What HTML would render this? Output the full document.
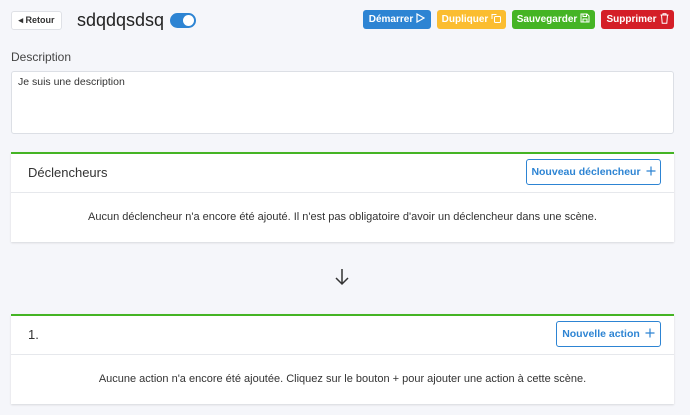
<!DOCTYPE html>
<html><head><meta charset="utf-8"><style>
*{box-sizing:border-box;margin:0;padding:0}
body{width:690px;height:415px;background:#f5f6fa;font-family:"Liberation Sans",sans-serif;color:#333;position:relative;overflow:hidden}
.a{position:absolute}
.btn{position:absolute;height:19px;line-height:19px;border-radius:3px;color:#fff;font-size:10px;font-weight:bold;text-align:center;white-space:nowrap}
.btn svg,.ob svg{vertical-align:middle;margin-left:3px;position:relative;top:-1px}
.card{position:absolute;left:11px;width:663px;background:#fff;border-top:2px solid #45b424;box-shadow:0 1px 2px rgba(0,0,0,.12)}
.hd{height:39px;border-bottom:1px solid #e6e8ec;position:relative}
.ob{position:absolute;height:26px;line-height:24px;border:1px solid #2d84d3;border-radius:3px;color:#2d84d3;font-size:10.5px;font-weight:bold;text-align:center;background:#fff;white-space:nowrap}
.msg{font-size:11px;color:#333;text-align:center}
</style></head><body>
<div class="a" style="left:11px;top:11px;width:51px;height:19px;line-height:17px;text-align:center;background:#fff;border:1px solid #dfe1e6;border-radius:3px;font-size:9px;font-weight:bold;color:#333">◂ Retour</div>
<div class="a" style="left:77px;top:10px;font-size:18px;color:#222">sdqdqsdsq</div>
<div class="a" style="left:170px;top:13px;width:26px;height:15px;border-radius:8px;background:#2d84d3"><div style="position:absolute;right:2px;top:2px;width:11px;height:11px;border-radius:50%;background:#fff"></div></div>
<div class="btn" style="left:363px;top:10px;width:68px;background:#2d84d3">Démarrer<svg width="9" height="10" viewBox="0 0 9 10"><path d="M1 1L8 5L1 9Z" fill="none" stroke="#fff" stroke-width="1.2"/></svg></div>
<div class="btn" style="left:437px;top:10px;width:69px;background:#fbbd30">Dupliquer<svg width="10" height="10" viewBox="0 0 10 10"><rect x="3.5" y="3.5" width="6" height="6" rx="1" fill="none" stroke="#fff"/><path d="M1 6V1.5h4.5" fill="none" stroke="#fff"/></svg></div>
<div class="btn" style="left:512px;top:10px;width:83px;background:#45b424">Sauvegarder<svg width="10" height="10" viewBox="0 0 10 10"><path d="M1 1h6l2 2v6H1Z M3 1v2.5h3.5V1 M3 9V6h4v3" fill="none" stroke="#fff"/></svg></div>
<div class="btn" style="left:601px;top:10px;width:73px;background:#d41e27">Supprimer<svg width="9" height="11" viewBox="0 0 9 11"><path d="M0.5 2h8M3 2V0.8h3V2M1.5 2l.7 8.3h4.6L7.5 2" fill="none" stroke="#fff"/></svg></div>
<div class="a" style="left:11px;top:50px;font-size:12px;color:#444">Description</div>
<div class="a" style="left:11px;top:71px;width:663px;height:63px;background:#fff;border:1px solid #dcdfe5;border-radius:3px;padding:4px 6px;font-size:10.5px;color:#333">Je suis une description</div>
<div class="card" style="top:152px;height:90px">
<div class="hd"><div class="a" style="left:17px;top:11px;font-size:13px;color:#333">Déclencheurs</div>
<div class="ob" style="left:515px;top:5px;width:135px">Nouveau déclencheur<svg width="10" height="10" viewBox="0 0 10 10" style="margin-left:5px"><path d="M5 0.5V9.5M0.5 5H9.5" stroke="#2d84d3" stroke-width="1.2"/></svg></div></div>
<div class="msg" style="padding-top:18px">Aucun déclencheur n'a encore été ajouté. Il n'est pas obligatoire d'avoir un déclencheur dans une scène.</div>
</div>
<svg class="a" style="left:334px;top:268px" width="16" height="18" viewBox="0 0 16 18"><path d="M8 1V16M2 10L8 16L14 10" fill="none" stroke="#333" stroke-width="1.5"/></svg>
<div class="card" style="top:314px;height:90px">
<div class="hd"><div class="a" style="left:17px;top:11px;font-size:13px;color:#333">1.</div>
<div class="ob" style="left:545px;top:5px;width:105px">Nouvelle action<svg width="10" height="10" viewBox="0 0 10 10" style="margin-left:5px"><path d="M5 0.5V9.5M0.5 5H9.5" stroke="#2d84d3" stroke-width="1.2"/></svg></div></div>
<div class="msg" style="padding-top:18px">Aucune action n'a encore été ajoutée. Cliquez sur le bouton + pour ajouter une action à cette scène.</div>
</div>
</body></html>
